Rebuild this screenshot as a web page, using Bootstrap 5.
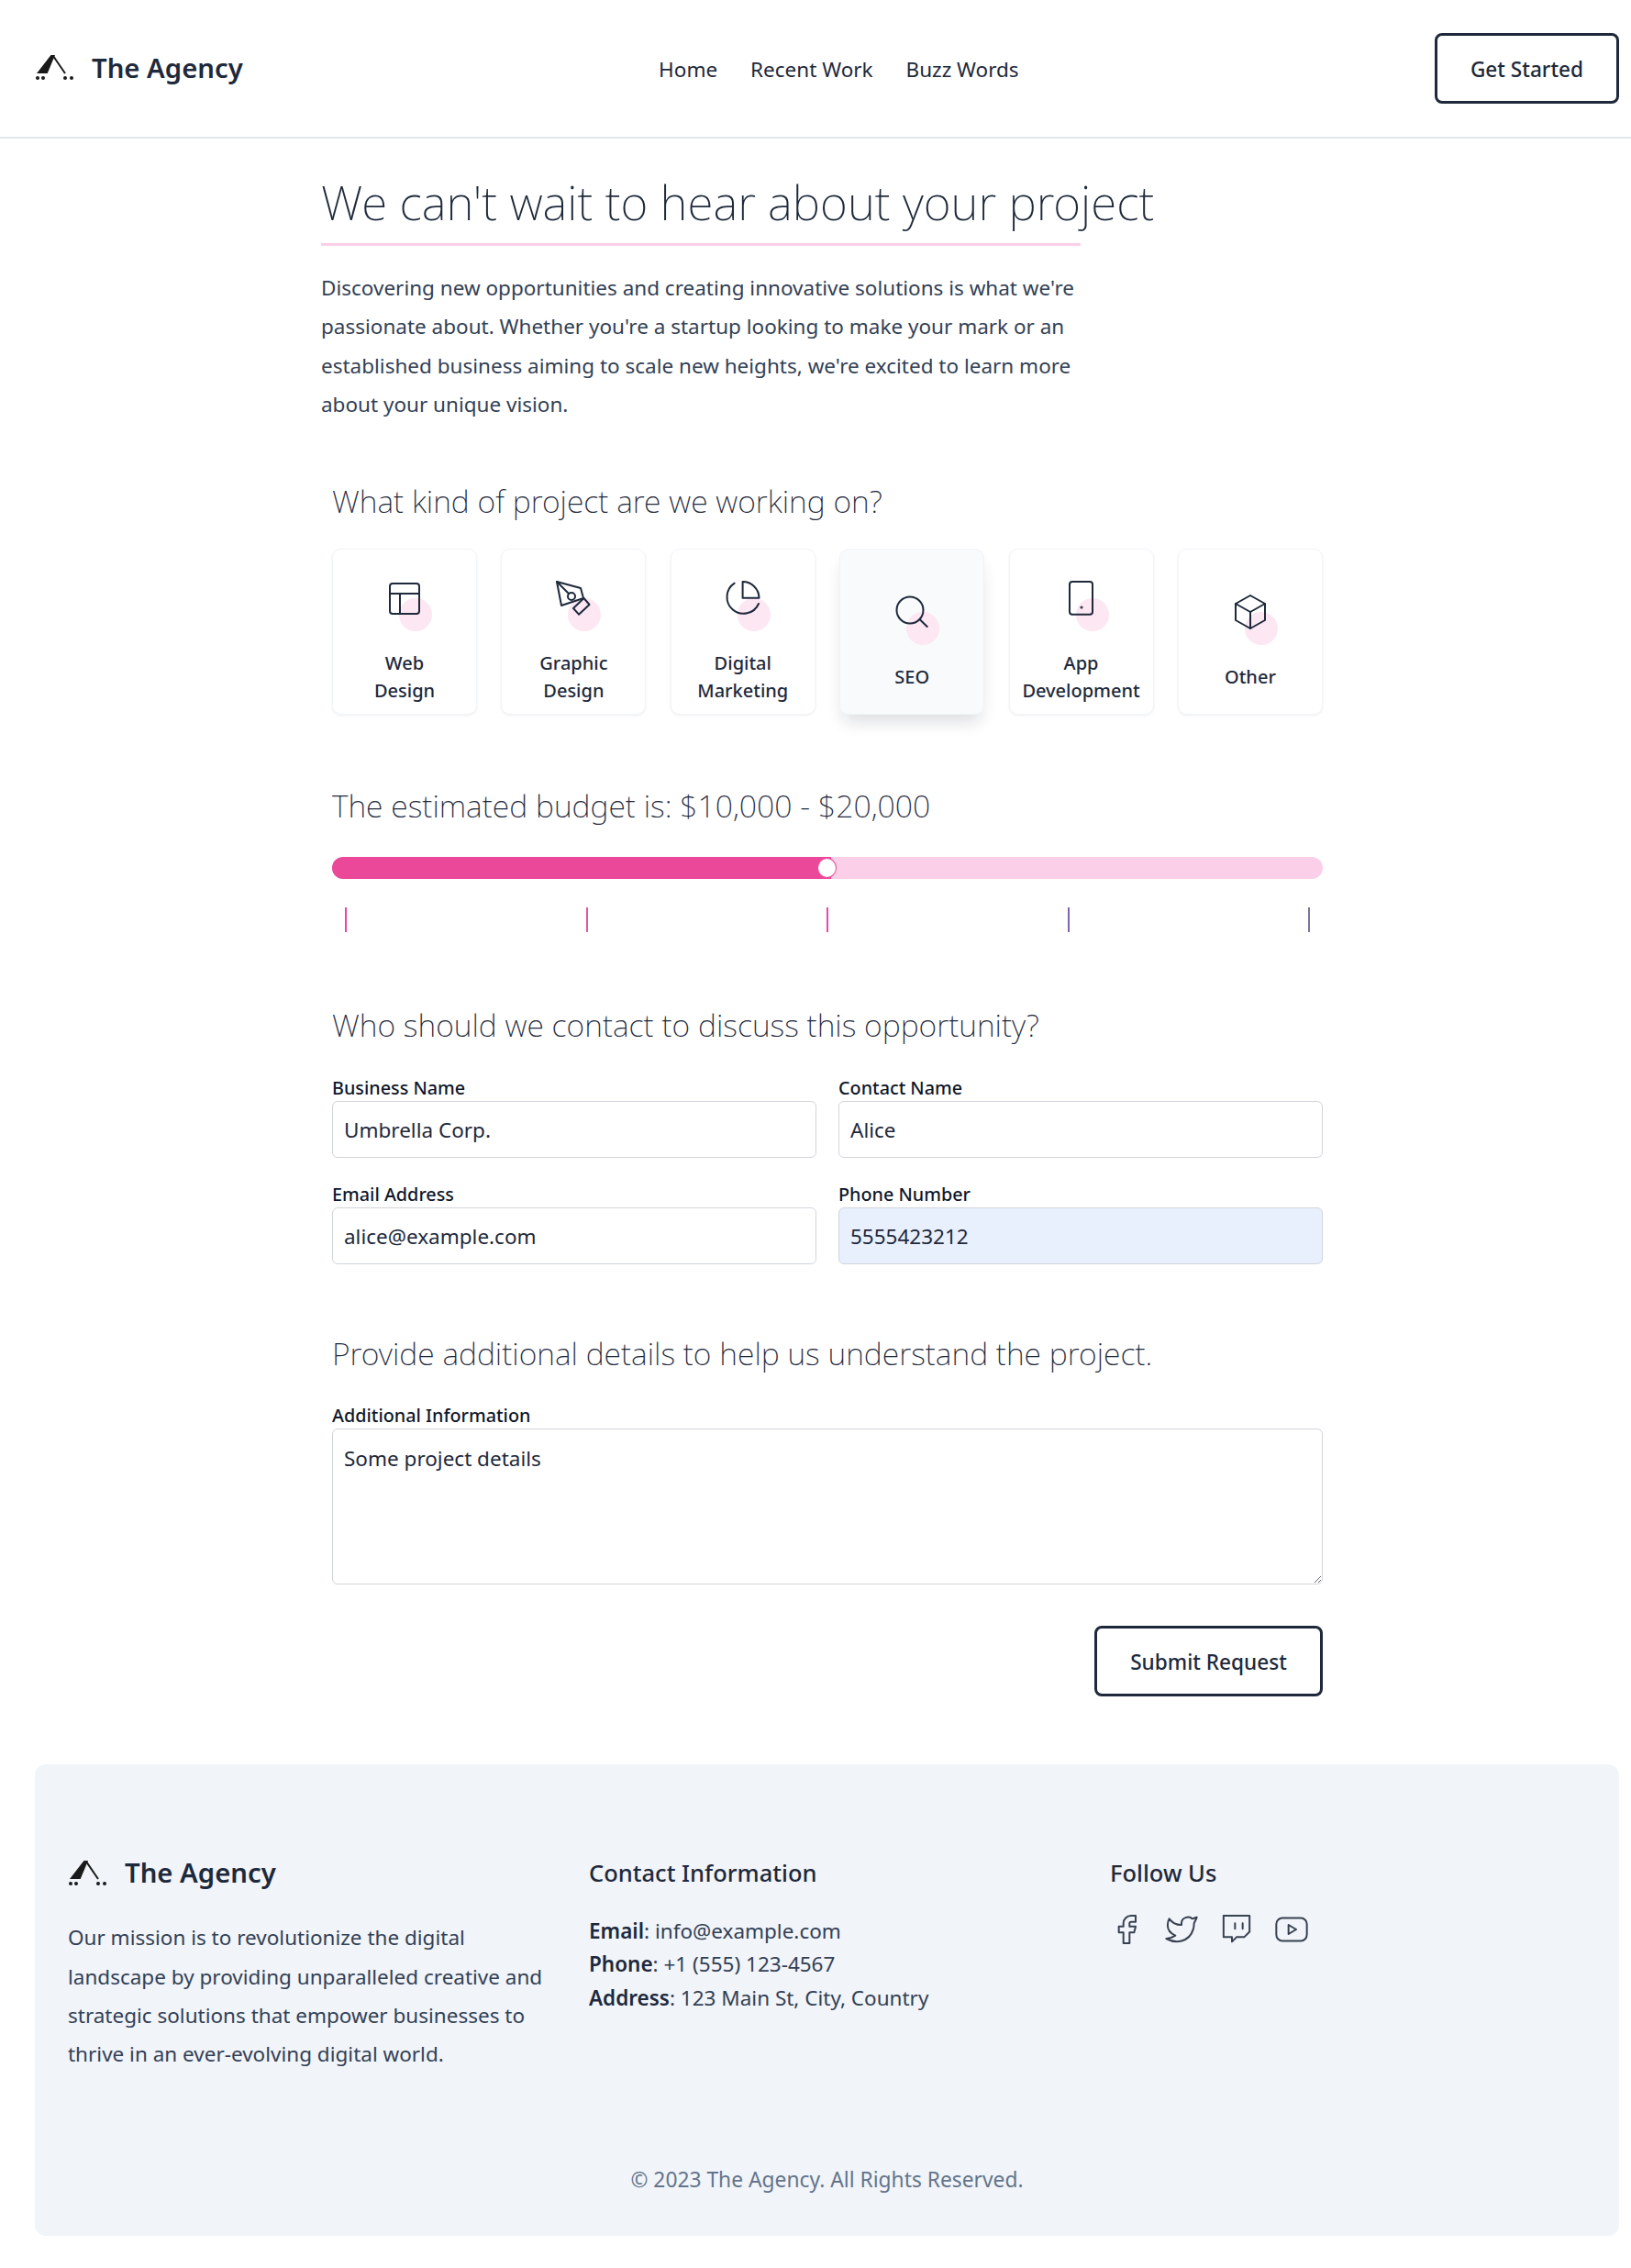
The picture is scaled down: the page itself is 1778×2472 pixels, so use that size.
<!DOCTYPE html>
<html lang="en">
<head>
  <meta charset="UTF-8" />
  <title>The Agency</title>
  <link href="https://cdn.jsdelivr.net/npm/bootstrap@5.3.0/dist/css/bootstrap.min.css" rel="stylesheet">
  <style>
    body { font-family: "Noto Sans", sans-serif; font-size: 22.5px; color: #1e293b; background: #fff; }
    .top-bar { height: 151px; padding: 0 13px 0 38px; border-bottom: 2px solid #e2e8f0; }
    .brand-name { font-size: 29.3px; font-weight: 600; color: #1e293b; margin-left: 20px; line-height: 1; }
    .brand-logo { width: 42px; height: 28px; display: block; }
    .top-bar .nav-link { padding: 0; font-size: 22.5px; color: #1e293b; }
    .top-links { gap: 36px; margin-top: 2px; }
    .btn-dark-line { border: 3px solid #1e293b; border-radius: 8px; color: #1e293b; font-weight: 500; font-size: 22.6px; height: 77px; padding-top: 8px; display: inline-flex; align-items: center; justify-content: center; background: #fff; }
    .btn-started { width: 201px; }
    .btn-submit { width: 249px; }
    .page-main { padding: 35.5px 336px 0 350px; }
    .page-title { font-size: 51.3px; font-weight: 200; line-height: 66px; color: #1e293b; margin: 0; white-space: nowrap; }
    .title-line { width: 828px; height: 3px; background: #fbcfe8; margin: 12px 0 25.5px; }
    .intro { width: 840px; line-height: 42.3px; color: #334155; margin-bottom: 59.5px; }
    .form-block { margin-left: 12px; }
    .sec-title { font-size: 33.8px; font-weight: 200; line-height: 48px; color: #1e293b; margin: 0 0 28px; }
    .budget-title { margin-bottom: 32px; }
    .contact-title { margin-bottom: 31.5px; }
    .details-title { margin-bottom: 30px; }
    .kind-row { display: grid; grid-template-columns: repeat(6, 158px); justify-content: space-between; margin-bottom: 75px; }
    .kind-card { height: 181px; border: 1px solid #f1f5f9; border-radius: 10px; box-shadow: 0 1px 3px rgba(15, 23, 42, .07); background: #fff; font-weight: 500; font-size: 20px; line-height: 30px; text-align: center; }
    .kind-card.is-hover { background: #f8fafc; box-shadow: 0 12px 18px -4px rgba(15, 23, 42, .14); }
    .kind-icon { position: relative; width: 48px; height: 48px; margin-top: 20px; margin-bottom: 31px; }
    .kind-icon::after { content: ""; position: absolute; right: -6px; bottom: -11px; width: 36px; height: 36px; border-radius: 50%; background: #fce7f3; }
    .kind-icon svg { position: relative; z-index: 1; display: block; width: 48px; height: 48px; fill: none; stroke: #1e293b; stroke-width: 2; stroke-linejoin: round; stroke-linecap: round; }
    .budget-track { position: relative; height: 24px; border-radius: 12px; background: #fbcfe8; overflow: visible; }
    .budget-track .progress-bar { background: #ec4899; border-radius: 12px 0 0 12px; }
    .budget-thumb { position: absolute; top: 1px; width: 21px; height: 22px; border-radius: 50%; background: #fff; border: 1px solid #ec4899; transform: translateX(-15px); }
    .tick-row { display: flex; justify-content: space-between; padding: 0 14px; margin: 31.5px 0 76.5px; }
    .tick-row span { width: 2px; height: 27px; }
    .tick-a { background: #ec4899; }
    .tick-b { background: #df5b9f; }
    .tick-c { background: #e64ab0; }
    .tick-d { background: #7d66ad; }
    .tick-e { background: #76769b; }
    .form-label { font-size: 19.8px; font-weight: 500; line-height: 28px; margin: 0; color: #0f172a; display: block; }
    .form-control { height: 62px; font-size: 22.5px; color: #1e293b; padding: 6px 12px; border: 1.5px solid #d1d5db; border-radius: 6px; box-shadow: none; }
    .filled-in { background: #e8f0fe; }
    textarea.form-control { height: 170px; padding-top: 15px; }
    .field-grid { row-gap: 26px; --bs-gutter-x: 24px; margin-bottom: 73px; }
    .submit-line { margin-top: 45px; }
    .page-foot { margin: 74px 13px 37px 38px; height: 514px; padding: 0 36px; border-radius: 12px; background: #f1f4f9; }
    .foot-grid { display: grid; grid-template-columns: 568px 568px 1fr; padding-top: 104px; height: 435px; }
    .foot-brand { margin-bottom: 35px; }
    .foot-about { padding-right: 38px; line-height: 42.3px; color: #334155; margin: 0; }
    .foot-head { font-size: 25.5px; font-weight: 500; line-height: 34px; margin: -3px 0 28.5px; color: #1e293b; }
    .foot-lines { line-height: 36.5px; color: #334155; }
    .foot-lines b { color: #1e293b; font-weight: 600; }
    .social-row { gap: 20px; margin: -3.5px 0 0 -2px; }
    .social-row svg { width: 40px; height: 40px; fill: none; stroke: #374151; stroke-width: 1.2; stroke-linejoin: round; stroke-linecap: round; }
    .foot-copy { color: #64748b; text-align: center; line-height: 36px; font-size: 22.8px; }
  </style>
</head>
<body>
  <nav class="top-bar d-flex align-items-center justify-content-between">
    <a class="d-flex align-items-center text-decoration-none" href="#">
      <svg class="brand-logo" viewBox="0 0 42 28"><path d="M17.5 0 22 0 13.7 20 2 20z" fill="#1a1a1a"/><path d="M20 1 33 20" stroke="#1a1a1a" stroke-width="2" fill="none"/><circle cx="3" cy="25" r="2" fill="#1a1a1a"/><circle cx="9" cy="25" r="2" fill="#1a1a1a"/><circle cx="33" cy="25" r="2" fill="#1a1a1a"/><circle cx="40" cy="25" r="2" fill="#1a1a1a"/></svg>
      <span class="brand-name">The Agency</span>
    </a>
    <div class="nav top-links">
      <a class="nav-link" href="#">Home</a>
      <a class="nav-link" href="#">Recent Work</a>
      <a class="nav-link" href="#">Buzz Words</a>
    </div>
    <a class="btn btn-dark-line btn-started" href="#">Get Started</a>
  </nav>

  <main class="page-main">
    <h1 class="page-title">We can't wait to hear about your project</h1>
    <div class="title-line"></div>
    <p class="intro">Discovering new opportunities and creating innovative solutions is what we're passionate about. Whether you're a startup looking to make your mark or an established business aiming to scale new heights, we're excited to learn more about your unique vision.</p>

    <form class="form-block">
      <h2 class="sec-title">What kind of project are we working on?</h2>
      <div class="kind-row">
        <div class="kind-card d-flex flex-column align-items-center justify-content-center">
          <div class="kind-icon"><svg viewBox="0 0 48 48"><rect x="8" y="7" width="32" height="33" rx="3"/><path d="M8 18h32M19 18v22"/></svg></div>
          <div>Web<br>Design</div>
        </div>
        <div class="kind-card d-flex flex-column align-items-center justify-content-center">
          <div class="kind-icon"><svg viewBox="0 0 48 48"><path d="M6 5 32 12 35 23 11 31z"/><path d="M35.5 23 41.5 30 30 40.7 24 34z"/><circle cx="22" cy="21" r="4"/><path d="M6 5 19 18"/></svg></div>
          <div>Graphic<br>Design</div>
        </div>
        <div class="kind-card d-flex flex-column align-items-center justify-content-center">
          <div class="kind-icon"><svg viewBox="0 0 48 48"><path d="M14.700 6.700A18 18 0 1 0 41 29"/><path d="M23.600 5v17.700h17.900A17.900 17.900 0 0 0 23.600 5z"/></svg></div>
          <div>Digital<br>Marketing</div>
        </div>
        <div class="kind-card is-hover d-flex flex-column align-items-center justify-content-center">
          <div class="kind-icon"><svg viewBox="0 0 48 48"><circle cx="22" cy="21" r="14.500"/><path d="M32.500 31 40.700 39"/></svg></div>
          <div>SEO</div>
        </div>
        <div class="kind-card d-flex flex-column align-items-center justify-content-center">
          <div class="kind-icon"><svg viewBox="0 0 48 48"><rect x="11" y="5" width="25" height="35.700" rx="3"/><circle cx="24" cy="33" r=".6"/></svg></div>
          <div>App<br>Development</div>
        </div>
        <div class="kind-card d-flex flex-column align-items-center justify-content-center">
          <div class="kind-icon"><svg viewBox="0 0 48 48"><path d="M24 5 40 14V32L24 41 8 32V14z"/><path d="M8 14 24 23 40 14M24 23V41"/></svg></div>
          <div>Other</div>
        </div>
      </div>

      <h2 class="sec-title budget-title">The estimated budget is: $10,000 - $20,000</h2>
      <div class="progress budget-track">
        <div class="progress-bar" style="width: 50.4%"></div>
        <span class="budget-thumb" style="left: 50.4%"></span>
      </div>
      <div class="tick-row">
        <span class="tick-a"></span><span class="tick-b"></span><span class="tick-c"></span><span class="tick-d"></span><span class="tick-e"></span>
      </div>

      <h2 class="sec-title contact-title">Who should we contact to discuss this opportunity?</h2>
      <div class="row field-grid">
        <div class="col-6">
          <label class="form-label" for="biz">Business Name</label>
          <input class="form-control" id="biz" type="text" value="Umbrella Corp.">
        </div>
        <div class="col-6">
          <label class="form-label" for="who">Contact Name</label>
          <input class="form-control" id="who" type="text" value="Alice">
        </div>
        <div class="col-6">
          <label class="form-label" for="mail">Email Address</label>
          <input class="form-control" id="mail" type="text" value="alice@example.com">
        </div>
        <div class="col-6">
          <label class="form-label" for="tel">Phone Number</label>
          <input class="form-control filled-in" id="tel" type="text" value="5555423212">
        </div>
      </div>

      <h2 class="sec-title details-title">Provide additional details to help us understand the project.</h2>
      <label class="form-label" for="info">Additional Information</label>
      <textarea class="form-control" id="info">Some project details</textarea>
      <div class="d-flex justify-content-end submit-line">
        <button class="btn btn-dark-line btn-submit" type="button">Submit Request</button>
      </div>
    </form>
  </main>

  <footer class="page-foot">
    <div class="foot-grid">
      <div>
        <div class="d-flex align-items-center foot-brand">
          <svg class="brand-logo" viewBox="0 0 42 28"><path d="M17.5 0 22 0 13.7 20 2 20z" fill="#1a1a1a"/><path d="M20 1 33 20" stroke="#1a1a1a" stroke-width="2" fill="none"/><circle cx="3" cy="25" r="2" fill="#1a1a1a"/><circle cx="9" cy="25" r="2" fill="#1a1a1a"/><circle cx="33" cy="25" r="2" fill="#1a1a1a"/><circle cx="40" cy="25" r="2" fill="#1a1a1a"/></svg>
          <span class="brand-name">The Agency</span>
        </div>
        <p class="foot-about">Our mission is to revolutionize the digital landscape by providing unparalleled creative and strategic solutions that empower businesses to thrive in an ever-evolving digital world.</p>
      </div>
      <div>
        <h3 class="foot-head">Contact Information</h3>
        <div class="foot-lines">
          <div><b>Email</b>: info@example.com</div>
          <div><b>Phone</b>: +1 (555) 123-4567</div>
          <div><b>Address</b>: 123 Main St, City, Country</div>
        </div>
      </div>
      <div>
        <h3 class="foot-head">Follow Us</h3>
        <div class="social-row d-flex">
          <svg viewBox="0 0 24 24"><path d="M7 10v4h3v7h4v-7h3l1-4h-4V8a1 1 0 0 1 1-1h3V3h-3a5 5 0 0 0-5 5v2H7"/></svg>
          <svg viewBox="0 0 24 24"><path d="M22 4.010c-1 .49-1.980.689-3 .99-1.121-1.265-2.783-1.335-4.380-.737S11.977 6.323 12 8v1c-3.245.083-6.135-1.395-8-4 0 0-4.182 7.433 4 11-1.872 1.247-3.739 2.088-6 2 3.308 1.803 6.913 2.423 10.034 1.517 3.580-1.040 6.522-3.723 7.651-7.742a13.840 13.840 0 0 0 .497-3.753c0-.249 1.510-2.772 1.818-4.013z"/></svg>
          <svg viewBox="0 0 24 24"><path d="M3.500 3h17v10.500l-3.500 3.500h-5l-3 3v-3h-5.500z"/><path d="M11 8v3.500M16 8v3.500"/></svg>
          <svg viewBox="0 0 24 24"><path d="M2 8.500a4 4 0 0 1 4-4h12a4 4 0 0 1 4 4v7a4 4 0 0 1-4 4H6a4 4 0 0 1-4-4z"/><path d="M10 9l5 3-5 3z"/></svg>
        </div>
      </div>
    </div>
    <div class="foot-copy">© 2023 The Agency. All Rights Reserved.</div>
  </footer>

  <script src="https://cdn.jsdelivr.net/npm/bootstrap@5.3.0/dist/js/bootstrap.bundle.min.js"></script>
</body>
</html>
